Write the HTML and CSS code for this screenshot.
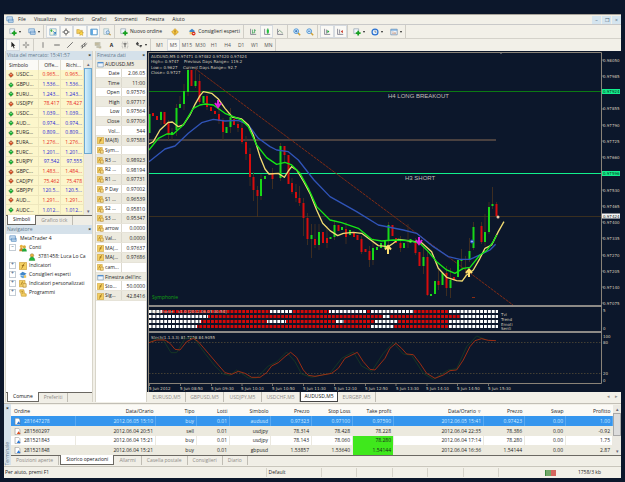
FILE: index.html
```html
<!DOCTYPE html>
<html lang="it">
<head>
<meta charset="utf-8">
<title>MetaTrader 4</title>
<link rel="stylesheet" href="styles.css">
</head>
<body>
<svg class="defs" aria-hidden="true">
  <symbol id="chart" viewBox="0 0 10 10"><path d="M1 2h8v6.500H1z" fill="#eef4fa" stroke="#6b8bab" stroke-width=".8"/><path d="M1 2.500h8" stroke="#3f86d0" stroke-width="1.600"/></symbol>
  <symbol id="plus" viewBox="0 0 10 10"><path d="M1 1h6v6H1z" fill="#eef4fa" stroke="#8a9aaa" stroke-width=".8"/><path d="M6.500 3.500v6M3.500 6.500h6" stroke="#16a020" stroke-width="2.200"/></symbol>
  <symbol id="profiles" viewBox="0 0 10 10"><path d="M1 1h7v5H1zM3 4h6v4H3z" fill="#cfe3f5" stroke="#4f86bb" stroke-width=".8"/></symbol>
  <symbol id="market" viewBox="0 0 10 10"><path d="M1 1h8v8H1z" fill="#f4f8e0" stroke="#6aa0c8" stroke-width=".8"/><path d="M3 5V2.500M2 3.500l1-1.500 1 1.500" stroke="#18a028" fill="none"/><path d="M5 4l3 3v-2M8 7.500H5.500" stroke="#2878c8" stroke-width="1.200" fill="none"/></symbol>
  <symbol id="target" viewBox="0 0 10 10"><circle cx="5" cy="5" r="2.500" fill="none" stroke="#555"/><path d="M5 .5v3M5 6.500v3M.5 5h3M6.500 5h3" stroke="#555"/></symbol>
  <symbol id="folder" viewBox="0 0 10 10"><path d="M1 2h3l1 1h3v4H1z" fill="#f5cf58" stroke="#b58a20" stroke-width=".6"/><path d="M6.500 4l1 1.700 2 .2-1.400 1.400.4 2-2-1-1.800 1 .4-2L3.600 6l2-.3z" fill="#ffd94a" stroke="#b58a20" stroke-width=".5"/></symbol>
  <symbol id="panel" viewBox="0 0 10 10"><path d="M1 1.500h8v7H1z" fill="#fff" stroke="#2c7fc0"/><path d="M2.500 2v6" stroke="#3f97dc" stroke-width="2"/></symbol>
  <symbol id="tester" viewBox="0 0 10 10"><path d="M1 1h6v7H1z" fill="#e8f0f8" stroke="#8aa" stroke-width=".7"/><circle cx="6" cy="5.500" r="2" fill="#cfe6fa" stroke="#5688b8" stroke-width=".9"/><path d="M7.500 7l2 2" stroke="#b88a30" stroke-width="1.300"/></symbol>
  <symbol id="coin" viewBox="0 0 10 10"><path d="M5 .8L9.200 5 5 9.200.8 5z" fill="#f6c744" stroke="#c28a18" stroke-width=".8"/><path d="M5 2.800v3M5 6.700v1" stroke="#845008"/></symbol>
  <symbol id="expert" viewBox="0 0 10 10"><path d="M1 4l4-3 4 3-4 2z" fill="#3f86c8"/><path d="M2 5h6v3H2z" fill="#f0c860"/><circle cx="7" cy="7" r="2.400" fill="#d83020"/><path d="M6 6.500h2v1H6z" fill="#fff"/></symbol>
  <symbol id="advisor" viewBox="0 0 10 10"><path d="M.5 4l4-3 5 2.500-4 2.500z" fill="#3f86c8"/><path d="M2 5l3 1.500 3-1.500v2.500L5 9 2 7.500z" fill="#5aa2dc"/><path d="M6 5.500h3v3H6z" fill="#f0c860"/></symbol>
  <symbol id="bars" viewBox="0 0 10 10"><path d="M2 1v7h7" fill="none" stroke="#667" stroke-width=".9"/><path d="M4.500 2v5M7 1.500v5M4.500 6H6M7 3h1.500" stroke="#2a9a48" stroke-width=".9"/></symbol>
  <symbol id="candles" viewBox="0 0 10 10"><path d="M2 1v7h7" fill="none" stroke="#667" stroke-width=".9"/><path d="M6 .5v7" stroke="#158a28"/><path d="M6 2v4" stroke="#1cc038" stroke-width="2.600"/></symbol>
  <symbol id="line" viewBox="0 0 10 10"><path d="M2 1v7h7" fill="none" stroke="#667" stroke-width=".9"/><path d="M2.500 5l2-2 4 3.500" fill="none" stroke="#5a8a68" stroke-width=".9"/></symbol>
  <symbol id="zoomin" viewBox="0 0 10 10"><path d="M6 6l3 3" stroke="#d0a030" stroke-width="1.800"/><circle cx="4" cy="4" r="3" fill="#d4ecfc" stroke="#3a88d0"/><path d="M2.500 4h3M4 2.500v3" stroke="#1a60b0"/></symbol>
  <symbol id="zoomout" viewBox="0 0 10 10"><path d="M6 6l3 3" stroke="#d0a030" stroke-width="1.800"/><circle cx="4" cy="4" r="3" fill="#d4ecfc" stroke="#3a88d0"/><path d="M2.500 4h3" stroke="#1a60b0"/></symbol>
  <symbol id="scroll" viewBox="0 0 10 10"><path d="M2 1v7h7M4.500 2v5" fill="none" stroke="#667" stroke-width=".9"/><path d="M5.500 2.500L8 4.500 5.500 6.500z" fill="#1ca038"/></symbol>
  <symbol id="shift" viewBox="0 0 10 10"><path d="M2 1v7h7M4.500 2v5" fill="none" stroke="#667" stroke-width=".9"/><path d="M8.500 2.500L6 4.500l2.500 2z" fill="#c83020"/></symbol>
  <symbol id="clock" viewBox="0 0 10 10"><circle cx="5" cy="5" r="3.700" fill="#e8f2fc" stroke="#2870d0" stroke-width="1.500"/><path d="M5 3v2.200h1.800" fill="none" stroke="#345" stroke-width=".7"/></symbol>
  <symbol id="template" viewBox="0 0 10 10"><path d="M1 1.500h8v7H1z" fill="#eef4fa" stroke="#6b8bab" stroke-width=".9"/><path d="M1 2.500h8" stroke="#5a9ad8" stroke-width="1.300"/><path d="M2.500 5h2l1 1h2M2.500 7h5" stroke="#c08a70" stroke-width=".7" fill="none"/></symbol>
  <symbol id="pointer" viewBox="0 0 10 10"><path d="M3 .8v7l1.700-1.500 1.300 3 1-.5-1.200-2.800H8z" fill="#222"/></symbol>
  <symbol id="cross" viewBox="0 0 10 10"><path d="M5 1v3.200M5 5.800V9M1 5h3.200M5.800 5H9" stroke="#444" stroke-width=".9"/></symbol>
  <symbol id="vline" viewBox="0 0 10 10"><path d="M5 1.500v7" stroke="#555" stroke-width=".9"/></symbol>
  <symbol id="hline" viewBox="0 0 10 10"><path d="M1.500 5h7" stroke="#444"/></symbol>
  <symbol id="trend" viewBox="0 0 10 10"><path d="M1.500 8.500l7-7" stroke="#555"/></symbol>
  <symbol id="channel" viewBox="0 0 10 10"><path d="M1 7l6-5M2 9l7-6M3 5v4M6 3v4" stroke="#555" stroke-width=".9"/></symbol>
  <symbol id="fibo" viewBox="0 0 10 10"><path d="M1 2.500h7M1 5h7M3 7.500h6" stroke="#775" stroke-width=".9"/><path d="M1 3.700h5M6 8.800h3" stroke="#b95" stroke-width=".5"/></symbol>
  <symbol id="label" viewBox="0 0 10 10"><path d="M1.500 1.500h7v7h-7z" fill="none" stroke="#888" stroke-width=".7" stroke-dasharray="1 1"/><path d="M3 3.500h4M5 3.500v4" stroke="#333"/></symbol>
  <symbol id="arrows" viewBox="0 0 10 10"><path d="M1 3.500l2-2.500 2 2.500-2 2.500zM5.500 5L9 5 7.300 8.500z" fill="#444"/><path d="M3 4l3 3" stroke="#444"/></symbol>
  <symbol id="func" viewBox="0 0 10 10"><path d="M.5 .5h9v9h-9z" fill="#f4cf62" stroke="#c89a34" stroke-width=".8"/><path d="M3 8c2 0 1.500-6 4-6M3.500 4.500h3" stroke="#86590c" fill="none" stroke-width=".9"/></symbol>
  <symbol id="custom" viewBox="0 0 10 10"><path d="M.5 .5h7v8h-7z" fill="#f4cf62" stroke="#c89a34" stroke-width=".8"/><path d="M2 6c2 0 1-4 3-4" stroke="#86590c" fill="none" stroke-width=".8"/><path d="M5 4.500h4v4.500H5z" fill="#f7dc88" stroke="#a87820" stroke-width=".7"/></symbol>
  <symbol id="script" viewBox="0 0 10 10"><path d="M1 1h5l1 5h2v3H3L2 4H1z" fill="#f4cf62" stroke="#c89a34" stroke-width=".8"/><path d="M3 3h2M3.500 5h2" stroke="#86590c" stroke-width=".7"/></symbol>
  <symbol id="user" viewBox="0 0 10 10"><circle cx="5" cy="3" r="2.200" fill="#e9b23c" stroke="#86702a" stroke-width=".5"/><path d="M1.500 9.500c0-6 7-6 7 0z" fill="#22b83a" stroke="#147a22" stroke-width=".5"/></symbol>
  <symbol id="users" viewBox="0 0 10 10"><circle cx="3" cy="3" r="2" fill="#e9b23c"/><path d="M.3 9c0-5.500 5.500-5.500 5.500 0z" fill="#c8862a"/><circle cx="6.700" cy="3.500" r="2" fill="#d8a838"/><path d="M3.700 9.500c0-5.500 6-5.500 6 0z" fill="#22a83a"/></symbol>
  <symbol id="doc" viewBox="0 0 10 10"><path d="M1.500 .5h5l2 2v7h-7z" fill="#fff" stroke="#777" stroke-width=".7"/><path d="M4 8.500l2.500-4 3 4z" fill="currentColor"/></symbol>
  <symbol id="tick" viewBox="0 0 10 10"><path d="M5 1l4 4-4 4-4-4z" fill="currentColor" stroke="#444" stroke-width=".7"/><path d="M3 5l2-2.400L7 5z" fill="#fff" opacity=".5"/></symbol>
</svg>

<div class="window">
  <header class="menubar">
    <svg class="icon"><use href="#profiles"/></svg>
    <nav class="menus">
      <button>File</button><button>Visualizza</button><button>Inserisci</button><button>Grafici</button><button>Strumenti</button><button>Finestra</button><button>Aiuto</button>
    </nav>
    <div class="winbuttons">
      <button aria-label="Riduci">–</button><button aria-label="Ripristina">❐</button><button aria-label="Chiudi">×</button>
    </div>
  </header>

  <div class="toolbar">
    <div class="group files">
      <button class="drop" aria-label="Nuovo grafico"><svg class="icon"><use href="#plus"/></svg></button>
      <button class="drop" aria-label="Profili"><svg class="icon"><use href="#profiles"/></svg></button>
    </div>
    <div class="group views">
      <button class="on" aria-label="Vista mercato"><svg class="icon"><use href="#market"/></svg></button>
      <button class="on" aria-label="Finestra dati"><svg class="icon"><use href="#target"/></svg></button>
      <button class="on" aria-label="Navigatore"><svg class="icon"><use href="#folder"/></svg></button>
      <button class="on" aria-label="Terminale"><svg class="icon"><use href="#panel"/></svg></button>
      <button aria-label="Tester"><svg class="icon"><use href="#tester"/></svg></button>
    </div>
    <div class="group orders">
      <button><svg class="icon"><use href="#plus"/></svg>Nuovo ordine</button>
      <button aria-label="MetaEditor"><svg class="icon"><use href="#coin"/></svg></button>
      <button><svg class="icon"><use href="#expert"/></svg>Consiglieri esperti</button>
    </div>
    <div class="group kinds">
      <button aria-label="Barre"><svg class="icon"><use href="#bars"/></svg></button>
      <button class="on" aria-label="Candele"><svg class="icon"><use href="#candles"/></svg></button>
      <button aria-label="Linea"><svg class="icon"><use href="#line"/></svg></button>
    </div>
    <div class="group pair">
      <button aria-label="Ingrandisci"><svg class="icon"><use href="#zoomin"/></svg></button>
      <button aria-label="Riduci"><svg class="icon"><use href="#zoomout"/></svg></button>
    </div>
    <div class="group pair">
      <button class="on" aria-label="Scorrimento"><svg class="icon"><use href="#scroll"/></svg></button>
      <button class="on" aria-label="Spostamento"><svg class="icon"><use href="#shift"/></svg></button>
    </div>
    <div class="group extras">
      <button class="drop" aria-label="Indicatori"><svg class="icon"><use href="#plus"/></svg></button>
      <button class="drop" aria-label="Periodi"><svg class="icon"><use href="#clock"/></svg></button>
      <button class="drop" aria-label="Modelli"><svg class="icon"><use href="#template"/></svg></button>
    </div>
  </div>

  <div class="toolbar">
    <div class="group pair">
      <button class="on" aria-label="Cursore"><svg class="icon"><use href="#pointer"/></svg></button>
      <button aria-label="Mirino"><svg class="icon"><use href="#cross"/></svg></button>
    </div>
    <div class="group draw">
      <button aria-label="Linea verticale"><svg class="icon"><use href="#vline"/></svg></button>
      <button aria-label="Linea orizzontale"><svg class="icon"><use href="#hline"/></svg></button>
      <button aria-label="Trendline"><svg class="icon"><use href="#trend"/></svg></button>
      <button aria-label="Canale"><svg class="icon"><use href="#channel"/></svg></button>
      <button aria-label="Fibonacci"><svg class="icon"><use href="#fibo"/></svg></button>
      <button class="letter">A</button>
      <button aria-label="Etichetta"><svg class="icon"><use href="#label"/></svg></button>
      <button class="drop" aria-label="Frecce"><svg class="icon"><use href="#arrows"/></svg></button>
    </div>
    <div class="group periods">
      <button>M1</button><button class="on">M5</button><button>M15</button><button>M30</button><button>H1</button><button>H4</button><button>D1</button><button>W1</button><button>MN</button>
    </div>
  </div>

  <main class="work">
    <aside class="side">
      <section class="panel">
        <h2 class="title">Vista del mercato: 15:41:57<button aria-label="Chiudi">×</button></h2>
        <div class="scrollarea">
          <table class="market">
            <thead><tr><th>Simbolo</th><th>Offe...</th><th>Richi...</th></tr></thead>
            <tbody>
              <tr class="down"><td><svg><use href="#tick"/></svg>USDC...</td><td>0.965...</td><td>0.965...</td></tr>
              <tr><td><svg><use href="#tick"/></svg>GBPU...</td><td>1.536...</td><td>1.536...</td></tr>
              <tr><td><svg><use href="#tick"/></svg>EURU...</td><td>1.243...</td><td>1.243...</td></tr>
              <tr class="down"><td><svg><use href="#tick"/></svg>USDJPY</td><td>78.417</td><td>78.427</td></tr>
              <tr><td><svg><use href="#tick"/></svg>USDC...</td><td>1.039...</td><td>1.039...</td></tr>
              <tr><td><svg><use href="#tick"/></svg>AUD...</td><td>0.974...</td><td>0.974...</td></tr>
              <tr><td><svg><use href="#tick"/></svg>EURG...</td><td>0.809...</td><td>0.809...</td></tr>
              <tr class="down"><td><svg><use href="#tick"/></svg>EURA...</td><td>1.276...</td><td>1.276...</td></tr>
              <tr><td><svg><use href="#tick"/></svg>EURC...</td><td>1.201...</td><td>1.201...</td></tr>
              <tr><td><svg><use href="#tick"/></svg>EURJPY</td><td>97.542</td><td>97.555</td></tr>
              <tr class="down"><td><svg><use href="#tick"/></svg>GBPC...</td><td>1.483...</td><td>1.484...</td></tr>
              <tr class="down"><td><svg><use href="#tick"/></svg>CADJPY</td><td>75.462</td><td>75.478</td></tr>
              <tr><td><svg><use href="#tick"/></svg>GBPJPY</td><td>120.5...</td><td>120.5...</td></tr>
              <tr class="down"><td><svg><use href="#tick"/></svg>AUD...</td><td>1.291...</td><td>1.291...</td></tr>
              <tr><td><svg><use href="#tick"/></svg>AUDC...</td><td>1.012...</td><td>1.012...</td></tr>
            </tbody>
          </table>
          <div class="scrollbar"><i>▴</i><b class="thumb"></b><i>▾</i></div>
        </div>
        <div class="tabs"><button class="on">Simboli</button><button>Grafico tick</button></div>
      </section>
      <section class="panel grow">
        <h2 class="title">Navigatore<button aria-label="Chiudi">×</button></h2>
        <ul class="tree">
          <li><svg class="icon"><use href="#profiles"/></svg>MetaTrader 4</li>
          <li class="node minus"><svg class="icon"><use href="#users"/></svg>Conti</li>
          <li class="leaf"><svg class="icon"><use href="#user"/></svg>3781458: Luca Lo Ca</li>
          <li class="node"><svg class="icon"><use href="#func"/></svg>Indicatori</li>
          <li class="node"><svg class="icon"><use href="#advisor"/></svg>Consiglieri esperti</li>
          <li class="node"><svg class="icon"><use href="#custom"/></svg>Indicatori personalizzati</li>
          <li class="node"><svg class="icon"><use href="#script"/></svg>Programmi</li>
        </ul>
        <div class="tabs"><button class="on">Comune</button><button>Preferiti</button></div>
      </section>
    </aside>

    <section class="panel data">
      <h2 class="title">Finestra dati<button aria-label="Chiudi">×</button></h2>
      <table class="values">
        <tr><th colspan="2"><svg><use href="#chart"/></svg>AUDUSD,M5</th></tr>
        <tr><td>Date</td><td>2.06.05</td></tr>
        <tr><td>Time</td><td>11:00</td></tr>
        <tr><td>Open</td><td>0.97576</td></tr>
        <tr><td>High</td><td>0.97717</td></tr>
        <tr><td>Low</td><td>0.97564</td></tr>
        <tr><td>Close</td><td>0.97706</td></tr>
        <tr><td>Vol...</td><td>544</td></tr>
        <tr><td class="f"><svg><use href="#func"/></svg>MA(8)</td><td>0.97588</td></tr>
        <tr><td class="f"><svg><use href="#custom"/></svg>Sym...</td><td></td></tr>
        <tr><td class="f"><svg><use href="#custom"/></svg>R3 ...</td><td>0.98923</td></tr>
        <tr><td class="f"><svg><use href="#custom"/></svg>R2 ...</td><td>0.98194</td></tr>
        <tr><td class="f"><svg><use href="#custom"/></svg>R1 ...</td><td>0.97731</td></tr>
        <tr><td class="f"><svg><use href="#custom"/></svg>P Day</td><td>0.97002</td></tr>
        <tr><td class="f"><svg><use href="#custom"/></svg>S1 ...</td><td>0.96539</td></tr>
        <tr><td class="f"><svg><use href="#custom"/></svg>S2 ...</td><td>0.95810</td></tr>
        <tr><td class="f"><svg><use href="#custom"/></svg>S3 ...</td><td>0.95347</td></tr>
        <tr><td class="f"><svg><use href="#custom"/></svg>arrow</td><td>0.0000</td></tr>
        <tr><td class="f"><svg><use href="#custom"/></svg>Val...</td><td>0.0000</td></tr>
        <tr><td class="f"><svg><use href="#func"/></svg>MA(...</td><td>0.97637</td></tr>
        <tr><td class="f"><svg><use href="#func"/></svg>MA(...</td><td>0.97686</td></tr>
        <tr><td class="f"><svg><use href="#custom"/></svg>cam...</td><td></td></tr>
        <tr><th colspan="2"><svg><use href="#chart"/></svg>Finestra dell'inc</th></tr>
        <tr><td class="f"><svg><use href="#func"/></svg>Sto...</td><td>50.0000</td></tr>
        <tr><td class="f"><svg><use href="#func"/></svg>Sig...</td><td>42.8416</td></tr>
      </table>
    </section>

    <section class="charts">
      <svg class="plot" viewBox="147 51 474 341" role="img" aria-label="AUDUSD,M5">
        <path d="M147 51h474v341H147z" fill="#0c172b"/>
        <path d="M149 216.500H601" stroke="#3a2f20"/>
        <path d="M149 91.500H601" stroke="#0b7a14"/>
        <path d="M149 140H496" stroke="#5f5148" stroke-width="1.500"/>
        <path d="M149 173.500H601" stroke="#12f08c"/>
        <path d="M195 68.500L513 305" stroke="#8c2c12" stroke-width=".9" stroke-dasharray="3 .8"/>
        <!-- wicks -->
        <path d="M149 106v32M161 111v14M168.500 120v20M172 128v12M176.500 104v32M180 96v12M184 84v26M188 66v30M195.500 70v18M199.500 74v30M207 94v16M219 104v20M223 118v22M230.500 108v25M238 120v12M242 122v22M246 136v24M250 148v38M253.500 172v29M257.500 186v31M261 174v26M272.500 168v21M280.500 143v38M284.500 146v16M292 178v16M296 184v18M299.500 186v20M303.500 198v38M307.500 213v32M311.500 224v34M315 224v24M319 224v26M327 226v22M334.500 220v20M346 222v22M361.500 236v18M369.500 246v21M373 238v27M388.500 222v25M400.500 236v16M408 224v24M415.500 238v17M423.500 246v28M427.500 250v46M438.500 270v20M446.500 266v30M450.500 268v30M461.500 249v20M465.500 256v22M469.500 238v24M473.500 222v28M481.500 222v22M485 214v32M489 202v32M492.500 187v22M496.500 202v15" stroke="#4a3420" stroke-width=".8"/>
        <path class="bull" d="M149.500 114v19M161 112v8M172 132v3M176.500 108v22M180 104v4M184 91v13M188 70v22M195.500 81v5M203.500 96v7M226.500 127v6M230.500 117v10M261 179v17M265 176v3M280.500 146v32M311.500 235v4M319 232v13M330.500 237v2M334.500 225v12M342 227v3M350 230v5M373 248v12M377 247v3M381 243v5M385 240v8M388.500 225v16M404 243v5M410.500 239v4M423.500 257v9M431 294v2M435 281v13M442.500 273v12M450.500 280v8M458 260v17M461.500 259v2M469.500 251v9M473.500 227v21M485 232v10M489 207v25M492.500 204v2"/>
        <path class="bear" d="M153 113v3M157 116v4M164.500 112v12M168.500 123v11M191.500 70v16M199.500 81v21M207 96v11M211 107v4M215 111v3M219 114v7M223 121v11M234 119v6M238 124v4M242 128v14M246 142v12M250 154v23M253.500 177v13M257.500 190v6M272.500 173v6M284.500 146v9M288.500 155v29M292 183v9M296 192v6M299.500 198v5M303.500 203v15M307.500 218v21M315 239v6M323 232v11M327 238v5M338.500 225v6M346 229v8M354 233v4M357.500 235v5M361.500 239v13M365.500 249v3M369.500 251v9M392.500 225v11M396 238v5M400.500 243v5M415.500 243v10M419.500 252v14M427.500 257v38M438.500 281v4M446.500 273v15M454 277v3M481.500 226v16M496.500 204v12"/>
        <path d="M472 297.500h3" stroke="#8c2c12"/>
        <g transform="translate(145 45) scale(.3333)" class="ma">
          <path class="blue" d="M12 350L60 312 90 303 130 265 170 233 205 223 240 228 280 226 310 240 340 280 375 305 395 315 430 320 460 345 507 405 555 455 635 500 700 540 775 555 815 565 865 605 910 635 945 643 975 643 1005 630 1035 615 1052 598"/>
          <path class="yellow" d="M12 297L25 290 45 255 70 232 82 231 100 245 115 240 135 210 150 178 165 152 175 140 200 145 220 162 240 190 262 216 290 222 310 240 325 270 345 335 360 372 372 387 400 385 418 397 430 378 440 365 455 375 475 408 495 445 515 495 533 535 555 557 578 572 595 565 625 562 650 565 670 580 700 602 730 605 745 595 760 583 795 588 830 593 860 620 880 670 905 697 935 707 952 708 965 690 985 675 1005 640 1020 610 1040 600 1060 560 1077 530"/>
          <path class="green" d="M12 315L40 280 65 267 85 267 115 240 145 190 165 180 180 177 205 180 240 205 290 225 310 245 335 300 365 338 395 358 420 352 440 360 465 385 490 430 515 485 555 525 590 533 640 550 680 583 710 588 745 585 795 587 825 595 850 620 875 650 905 675 930 685 955 670 975 667 1005 630 1025 617 1045 590 1055 570"/>
        </g>
        <path d="M218 100v5M215 103l3 4 3-4M419 237v5M416 240l3 4 3-4" class="arrow-sell"/>
        <path d="M388 254v-6M385 249.500l3-3.500 3 3.500M469 277v-6M466 273l3-3.500 3 3.500" class="arrow-buy"/>
        <circle cx="472" cy="241.500" r="1.500" fill="#9ab0e8" stroke="#2848d0"/>
        <circle cx="498" cy="217" r="1.500" fill="#e8c8a8"/>
        <path d="M499 52l2 2 2-2z" fill="#999"/>

        <g class="small">
          <text x="151" y="58">AUDUSD,M5  0.97471 0.97482 0.97420 0.97424</text>
          <text x="151" y="63">High= 0.9747</text><text x="184" y="63">Previous Days Range= 119.2</text>
          <text x="151" y="69">Low= 0.9627</text><text x="183" y="69">Current Days Range= 92.7</text>
          <text x="151" y="74">Close= 0.9727</text>
        </g>
        <text x="388" y="98" class="note">H4 LONG BREAKOUT</text>
        <text x="405" y="180" class="note">H3 SHORT</text>
        <text x="152" y="299" class="brand">Symphonie</text>

        <!-- trend matrix -->
        <g stroke-width="3">
          <path d="M149 311.500H498M149 316.500H498M149 321.500H498M149 326.500H498" stroke="#fff"/>
          <path d="M162 311.500H270M293 311.500H329M367 311.500H371M414 311.500H448M208 316.500H383M390 316.500H460M201 321.500H267M286 321.500H336M344 321.500H375M398 321.500H448M197 326.500H371M394 326.500H448" stroke="#d40808"/>
          <path d="M151.500 318.900H498" stroke="#0c172b" stroke-width="20" stroke-dasharray="1 2.900"/>
        </g>
        <g class="small">
          <text x="151" y="313">Symphonie</text><text x="178" y="313">v1.0 [2012.06.05 00:54]</text>
          <text x="501" y="316">Tvi</text><text x="501" y="321">Trend</text><text x="501" y="326">Emoti</text><text x="501" y="330">Senti</text>
          <text x="151" y="339">Stoch(1.1.3.3) 81.7258 84.9055</text>
        </g>

        <!-- stochastic -->
        <path d="M149 342.500H601M149 373.500H601" stroke="#5c5038" stroke-width=".7" stroke-dasharray="1.500 1.500"/>
        <g transform="translate(145 290) scale(.3333)" fill="none" stroke-width="2.600">
          <path d="M12 158L35 146 55 150 78 188 95 188 120 145 145 142 180 190 210 228 235 252 255 256 275 240 310 264 335 264 370 228 395 216 425 186 450 215 470 252 500 262 555 250 590 205 625 186 650 228 680 244 715 190 745 158 775 192 800 196 835 250 865 268 910 240 935 236 965 170 995 138 1020 148" stroke="#163a24"/>
          <path d="M12 158L35 150 60 150 75 160 90 178 105 180 125 155 145 145 160 155 190 190 220 225 240 248 260 253 280 244 300 250 320 262 345 262 365 248 380 228 400 218 420 200 437 187 455 202 475 240 490 256 510 259 560 250 580 235 600 205 637 187 655 215 675 238 690 240 720 205 735 175 753 160 770 175 785 192 805 194 825 220 845 250 870 265 895 255 915 242 935 240 955 210 975 170 990 152 1010 146 1030 151 1053 152" stroke="#b0300f"/>
        </g>

        <path d="M148.500 392V52.500H601.500V383.500M148.500 383.500H601.500" fill="none" stroke="#8a8378"/>
        <path d="M148 306H602M148 332H602" stroke="#8d8a86" stroke-width="2"/>
        <path d="M602 60h2M602 76h2M602 109h2M602 125h2M602 141h2M602 157h2M602 190h2M602 206h2M602 222h2M602 238h2M602 255h2M602 271h2M602 287h2M602 303h2M149.500 384v2M180.500 384v2M211.500 384v2M242 384v2M272.500 384v2M303.500 384v2M334.500 384v2M365.500 384v2M396 384v2M427 384v2M457.500 384v2M488.500 384v2" stroke="#8a8378" stroke-width=".8"/>
        <path d="M602 89h18v5h-18zM602 171h18v5h-18z" fill="#12f08c"/>
        <path d="M602 213.500h18v5h-18z" fill="#f4f4f4"/>
        <g class="small">
          <text x="603" y="61.500">0.98050</text><text x="603" y="77.500">0.97985</text><text x="603" y="93" class="dark">0.97924</text>
          <text x="603" y="110">0.97855</text><text x="603" y="126.500">0.97790</text><text x="603" y="142.500">0.97725</text><text x="603" y="159">0.97660</text>
          <text x="603" y="175" class="dark">0.97596</text><text x="603" y="191.500">0.97530</text><text x="603" y="207.500">0.97465</text>
          <text x="603" y="217.500" class="dark">0.97424</text><text x="603" y="224">0.97400</text><text x="603" y="240">0.97335</text>
          <text x="603" y="256.500">0.97270</text><text x="603" y="273">0.97205</text><text x="603" y="289">0.97140</text><text x="603" y="305">0.97075</text>
          <text x="603" y="312">5</text><text x="603" y="330">0</text>
          <text x="603" y="338">100</text><text x="603" y="344">80</text><text x="603" y="375">20</text><text x="603" y="382">0</text>
          <text x="149" y="389.500">5 Jun 2012</text><text x="180" y="389.500">5 Jun 08:50</text><text x="211" y="389.500">5 Jun 09:30</text>
          <text x="241" y="389.500">5 Jun 10:10</text><text x="272" y="389.500">5 Jun 10:50</text><text x="303" y="389.500">5 Jun 11:30</text>
          <text x="334" y="389.500">5 Jun 12:10</text><text x="365" y="389.500">5 Jun 12:50</text><text x="396" y="389.500">5 Jun 13:30</text>
          <text x="426" y="389.500">5 Jun 14:10</text><text x="457" y="389.500">5 Jun 14:50</text><text x="488" y="389.500">5 Jun 15:30</text>
        </g>
      </svg>
      <div class="charttabs">
        <button>EURUSD,M5</button><button>GBPUSD,M5</button><button>USDJPY,M5</button><button>USDCHF,M5</button><button class="on">AUDUSD,M5</button><button>EURGBP,M5</button>
        <span class="arrows"><i>◂</i><i>▸</i></span>
      </div>
    </section>
  </main>

  <section class="terminal">
    <div class="spine"><button aria-label="Chiudi">×</button><span>Terminale</span></div>
    <div class="ledger">
      <div class="scrollarea">
        <table class="history">
          <colgroup><col><col class="date"><col class="c"><col class="lots"><col class="c"><col class="c"><col class="c"><col class="c"><col class="close"><col class="c"><col class="c"><col class="profit"></colgroup>
          <thead><tr><th>Ordine</th><th>Data/Orario</th><th>Tipo</th><th>Lotti</th><th>Simbolo</th><th>Prezzo</th><th>Stop Loss</th><th>Take profit</th><th>Data/Orario&nbsp; ▿</th><th>Prezzo</th><th>Swap</th><th>Profitto</th></tr></thead>
          <tbody>
            <tr class="sel"><td><svg><use href="#doc"/></svg>281647278</td><td>2012.06.05 15:10</td><td>buy</td><td>0.01</td><td>audusd</td><td>0.97323</td><td>0.97100</td><td>0.97590</td><td>2012.06.05 15:41</td><td>0.97423</td><td>0.00</td><td>1.00</td></tr>
            <tr class="short"><td><svg><use href="#doc"/></svg>281560297</td><td>2012.06.04 20:51</td><td>sell</td><td>0.01</td><td>usdjpy</td><td>78.314</td><td>78.428</td><td>78.228</td><td>2012.06.04 22:35</td><td>78.386</td><td>0.00</td><td>-0.92</td></tr>
            <tr><td><svg><use href="#doc"/></svg>281521843</td><td>2012.06.04 15:21</td><td>buy</td><td>0.01</td><td>usdjpy</td><td>78.143</td><td>78.060</td><td class="hit">78.280</td><td>2012.06.04 17:14</td><td>78.280</td><td>0.00</td><td>1.75</td></tr>
            <tr><td><svg><use href="#doc"/></svg>281521848</td><td>2012.06.04 15:21</td><td>buy</td><td>0.01</td><td>gbpusd</td><td>1.53857</td><td>1.53640</td><td class="hit">1.54144</td><td>2012.06.04 16:36</td><td>1.54144</td><td>0.00</td><td>2.87</td></tr>
          </tbody>
        </table>
        <div class="scrollbar grey"><i>▴</i><b class="thumb"></b><i>▾</i></div>
      </div>
      <div class="tabs"><button>Posizioni aperte</button><button class="on">Storico operazioni</button><button>Allarmi</button><button>Casella postale</button><button>Consiglieri</button><button>Diario</button></div>
    </div>
  </section>

  <footer class="status">
    <span class="help">Per aiuto, premi F1</span><span class="profile">Default</span><span></span><span></span><span></span><span></span><span></span>
    <span class="net"><svg viewBox="0 0 12 6"><path d="M0 0h6v6H0z" fill="#3c8a3c"/><path d="M6 0h5v6H6z" fill="#c83030"/><path d="M2 0v6M4 0v6M6 0v6M8 0v6M10 0v6" stroke="#f3ead0" stroke-width=".6"/></svg>1758/3 kb</span>
  </footer>
</div>
</body>
</html>
```
FILE: styles.css
```css
* { box-sizing: border-box; }

body {
  margin: 0;
  padding: 14px 4px 4px;
  background: #0c172b;
  color: #1c1c1c;
  font: 5px/9px "Open Sans", "Noto Sans", sans-serif;
}

.defs { position: absolute; width: 0; height: 0; }

button {
  margin: 0;
  padding: 0;
  border: 0;
  background: none;
  color: inherit;
  font: inherit;
}

i { font-style: normal; }

.window {
  background: #f2f0e8;
  border-top: 1px solid #a9a49a;
}

.icon { width: 8px; height: 8px; flex: none; }

/* Menu */
.menubar {
  display: flex;
  align-items: center;
  height: 10px;
  padding-left: 2px;
  border-bottom: 1px solid #c9c9c9;
}
.menus { display: flex; gap: 8px; margin-left: 4px; }
.winbuttons { display: flex; gap: 1px; margin-left: auto; }
.winbuttons button { width: 9px; height: 8px; line-height: 8px; background: #d5e5ef; color: #4a6478; }

/* Toolbars */
.toolbar { display: flex; gap: 2px; height: 13px; padding-left: 2px; }
.toolbar + .toolbar { height: 13px; border-top: 1px solid #d4d2ca; }
.group { display: flex; border-right: 1px solid #d0cec6; }
.group button { display: flex; flex: 1; align-items: center; justify-content: center; gap: 2px; }
.group button.on { background: #faf9f5; outline: 1px solid #d6dbe0; outline-offset: -1px; }
.group .drop::after { content: ""; border: 1px solid transparent; border-top: 2px solid #222; border-bottom: 0; }
.files { width: 38px; }
.views { width: 69px; }
.group.orders { gap: 3px; }
.orders button { flex: auto; }
.orders { width: 127px; }
.kinds { width: 42px; }
.pair { width: 28px; }
.extras { width: 56px; }
.draw { width: 115px; }
.draw .drop { flex: 1.300; }
.letter { font-weight: bold; }
.periods { width: 123px; }
.periods button { color: #555; }

/* Work area */
.work { display: grid; grid-template-columns: 90px 52px 1fr; padding-left: 1px; }
.work, .charts { min-width: 0; }
.side { display: flex; flex-direction: column; min-width: 0; padding-right: 2px; }
.panel { min-width: 0; background: #fff; overflow: hidden; border: 1px solid #d8d5ca; border-width: 0 1px; }
.grow { display: flex; flex: 1; flex-direction: column; }
.title {
  display: flex;
  justify-content: space-between;
  margin: 0;
  padding: 0 1px;
  height: 9px;
  background: #d5e1ea;
  color: #62788a;
  font: inherit;
  white-space: nowrap;
}
.title button { color: #111; font-weight: bold; }
.scrollarea { display: flex; }
table { border-collapse: collapse; table-layout: fixed; }
td, th { padding: 0; overflow: hidden; font-weight: normal; line-height: 8px; white-space: nowrap; }
td svg, th svg { width: 7px; height: 7px; vertical-align: middle; }

.market { flex: 1; width: 0; height: 155px; background: #fcf6cb; }
.market th { height: 10px; background: #fbfaf6; border-right: 1px solid #e0ddd2; text-align: right; padding-right: 2px; }
.market th:first-child { width: 32px; padding-left: 3px; text-align: left; }
.market td { border: 1px solid #eee7bd; border-width: 0 1px 1px 0; color: #2626d8; text-align: right; padding-right: 1px; }
.market td:first-child { color: #222; text-align: left; padding-left: 2px; }
.market td svg { width: 6px; height: 6px; margin-right: 2px; color: #12b82c; }
.market .down td { color: #e82a1c; }
.market .down td:first-child { color: #222; }
.market .down svg { color: #e05020; }

.scrollbar { display: flex; flex-direction: column; width: 8px; background: #ebe9e2; text-align: center; }
.scrollbar i { height: 8px; line-height: 8px; color: #667; }
.scrollbar .thumb { flex: none; height: 86px; border: 1px solid #6ca8d0; background: linear-gradient(90deg, #d4effc, #9fd2f0); }
.scrollbar i:last-child { margin-top: auto; }

.tabs { display: flex; height: 10px; background: #f0eee6; border-top: 1px solid #6b6862; }
.tabs button { padding: 0 5px; border-right: 1px solid #c0bdb4; color: #8f8d88; white-space: nowrap; }
.tabs .on { margin: -1px 0 0 1px; background: #fff; color: #111; border: 1px solid #6b6862; border-top: 0; }

.tree { flex: 1; margin: 0; padding: 0 0 0 3px; list-style: none; overflow: hidden; }
.tree li { display: flex; align-items: center; gap: 3px; height: 9px; white-space: nowrap; }
.tree .node, .tree .leaf { gap: 2px; }
.tree .node::before { content: "+"; width: 5px; height: 5px; margin-right: 1px; border: 1px solid #c4ccd4; color: #357; line-height: 3px; text-align: center; }
.tree .minus::before { content: "–"; }
.tree .leaf { padding-left: 19px; }

.values { width: 100%; height: 241px; }
.values tr:nth-child(odd) { background: #eceadf; }
.values th { text-align: left; padding-left: 1px; }
.values th svg { margin-right: 1px; }
.values td { text-align: right; padding-right: 1px; border-bottom: 1px solid #e6e3d8; }
.values td + td { border-left: 1px solid #dcd9ce; }
.values .f { text-align: left; padding-left: 1px; }
.values .f svg { margin-right: 1px; }

/* Chart */
.charts { display: flex; flex-direction: column; background: #f2f0e8; }
.plot { display: block; width: 100%; height: auto; }
.small { fill: #d6ccbd; font: 4px "DejaVu Sans", sans-serif; }
.small .dark { fill: #10281c; }
.note { fill: #c2bfba; font: 6px "Liberation Sans", Arial, sans-serif; }
.brand { fill: #12a012; font: 5px "Open Sans", sans-serif; }
.bull { stroke: #18d818; stroke-width: 2; }
.bear { stroke: #d80c0c; stroke-width: 2; }
.ma { fill: none; stroke-width: 4; stroke-linejoin: round; }
.ma .blue { stroke: #3054b8; }
.ma .yellow { stroke: #f2dc72; }
.ma .green { stroke: #16e616; }
.arrow-sell { fill: none; stroke: #e020e0; stroke-width: 2; }
.arrow-buy { fill: none; stroke: #ffe070; stroke-width: 2; }

.charttabs { display: flex; height: 10px; padding-left: 1px; color: #8f8d88; }
.charttabs button { flex: 0 0 38px; border-right: 1px solid #c0bdb4; }
.charttabs .on { background: #fff; color: #111; border: 1px solid #444; border-top: 0; }
.arrows { display: flex; gap: 5px; margin-left: auto; padding-right: 3px; }

/* Terminal */
.terminal { display: flex; margin-top: 1px; border-top: 1px solid #c2bfb6; }
.spine { display: flex; flex-direction: column; align-items: center; justify-content: space-between; width: 7px; background: #d5e1ea; color: #62788a; }
.spine button { color: #111; font-weight: bold; }
.spine span { writing-mode: vertical-rl; transform: rotate(180deg); line-height: 7px; }
.ledger { flex: 1; min-width: 0; padding-top: 1px; }
.history { flex: 1; width: 0; height: 50px; background: #fff; }
.history .date { width: 80px; }
.history .c { width: 41px; }
.history .lots { width: 33px; }
.history .close { width: 90px; }
.history .profit { width: 47px; }
.history th { height: 11px; background: #fbfaf6; text-align: right; padding-right: 2px; }
.history td { text-align: right; padding-right: 2px; border-right: 1px solid #ebe9e0; }
.history th:first-child, .history td:first-child { text-align: left; padding-left: 3px; }
.history td svg { margin-right: 3px; color: #2878d8; }
.history .short svg { color: #e05020; }
.history tbody tr:nth-child(even) { background: #eceadf; }
.history .sel { background: #3596ee; color: #d8ecff; }
.history .sel td { border-color: #5aaaf2; }
.history .hit { background: #3fe81c; }
.grey .thumb { height: 23px; border-color: #a8a8a8; background: #dcdcdc; }

/* Status bar */
.status { display: flex; height: 12px; align-items: center; margin-top: 1px; border-top: 1px solid #c9c6bc; }
.status span { flex: 33; height: 9px; padding-left: 2px; border-right: 1px solid #d6d3c9; }
.status .help { flex: 265; padding-left: 1px; }
.status .profile { flex: 53; }
.status .net { display: flex; flex: none; width: 122px; align-items: center; justify-content: space-between; padding: 0 20px 0 46px; border: 0; }
.net svg { width: 12px; height: 6px; }
```
